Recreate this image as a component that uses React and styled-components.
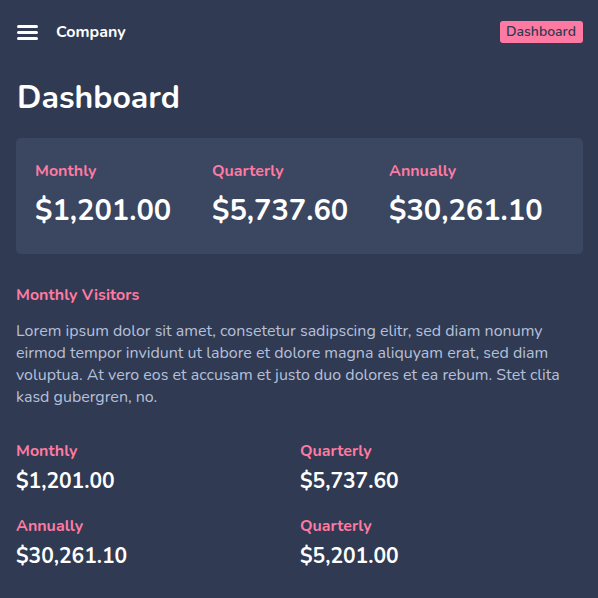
import React from "react";
import styled, { createGlobalStyle } from "styled-components";

const Global = createGlobalStyle`
  html, body { margin: 0; padding: 0; background: #303a52; }
  body { font-family: "Nunito", "Lato", "Noto Sans", sans-serif; color: #fff; }
  * { box-sizing: border-box; }
`;

const Page = styled.div`
  background: #303a52;
  min-height: 598px;
  padding: 0 15px 0 16px;
`;

const Header = styled.header`
  display: flex;
  align-items: center;
  height: 64px;
  gap: 18px;
`;

const Burger = styled.button`
  background: none;
  border: 0;
  padding: 0;
  margin-left: 1px;
  width: 21px;
  height: 15px;
  display: flex;
  flex-direction: column;
  justify-content: space-between;
  cursor: pointer;
  span {
    display: block;
    height: 3px;
    border-radius: 2px;
    background: #fff;
  }
`;

const Brand = styled.div`
  font-weight: 700;
  font-size: 16px;
  flex: 1;
`;

const Badge = styled.span`
  background: #ff7aa2;
  color: #303a52;
  font-size: 14px;
  font-weight: 600;
  padding: 3px 7px 3px 6px;
  border-radius: 3px;
  line-height: 16px;
`;

const Title = styled.h1`
  margin: 14px 0 0 1px;
  font-size: 32px;
  font-weight: 700;
  line-height: 40px;
`;

const Card = styled.section`
  margin-top: 20px;
  background: #3b4660;
  border-radius: 5px;
  padding: 22px 19px 25px 19px;
  display: grid;
  grid-template-columns: repeat(3, 177px);
`;

const Label = styled.div`
  color: #ff7aa2;
  font-weight: 700;
  font-size: 16px;
  line-height: 22px;
`;

const BigValue = styled.div`
  margin-top: 11px;
  font-weight: 700;
  font-size: 29px;
  line-height: 36px;
`;

const Section = styled.section`
  margin-top: 30px;
`;

const Para = styled.p`
  margin: 14px 0 0;
  color: #b6c0da;
  font-size: 16px;
  line-height: 22px;
`;

const Grid = styled.div`
  margin-top: 32px;
  display: grid;
  grid-template-columns: 284px 1fr;
  row-gap: 20px;
`;

const Value = styled.div`
  margin-top: 6px;
  font-weight: 700;
  font-size: 21px;
  line-height: 27px;
`;

const stats = [
  ["Monthly", "$1,201.00"],
  ["Quarterly", "$5,737.60"],
  ["Annually", "$30,261.10"],
];

const small = [
  ["Monthly", "$1,201.00"],
  ["Quarterly", "$5,737.60"],
  ["Annually", "$30,261.10"],
  ["Quarterly", "$5,201.00"],
];

export default function App() {
  return (
    <Page>
      <Global />
      <Header>
        <Burger aria-label="menu">
          <span />
          <span />
          <span />
        </Burger>
        <Brand>Company</Brand>
        <Badge>Dashboard</Badge>
      </Header>
      <Title>Dashboard</Title>
      <Card>
        {stats.map(([l, v]) => (
          <div key={l}>
            <Label>{l}</Label>
            <BigValue>{v}</BigValue>
          </div>
        ))}
      </Card>
      <Section>
        <Label>Monthly Visitors</Label>
        <Para>
          Lorem ipsum dolor sit amet, consetetur sadipscing elitr, sed diam nonumy eirmod tempor
          invidunt ut labore et dolore magna aliquyam erat, sed diam voluptua. At vero eos et
          accusam et justo duo dolores et ea rebum. Stet clita kasd gubergren, no.
        </Para>
      </Section>
      <Grid>
        {small.map(([l, v], i) => (
          <div key={i}>
            <Label>{l}</Label>
            <Value>{v}</Value>
          </div>
        ))}
      </Grid>
    </Page>
  );
}
